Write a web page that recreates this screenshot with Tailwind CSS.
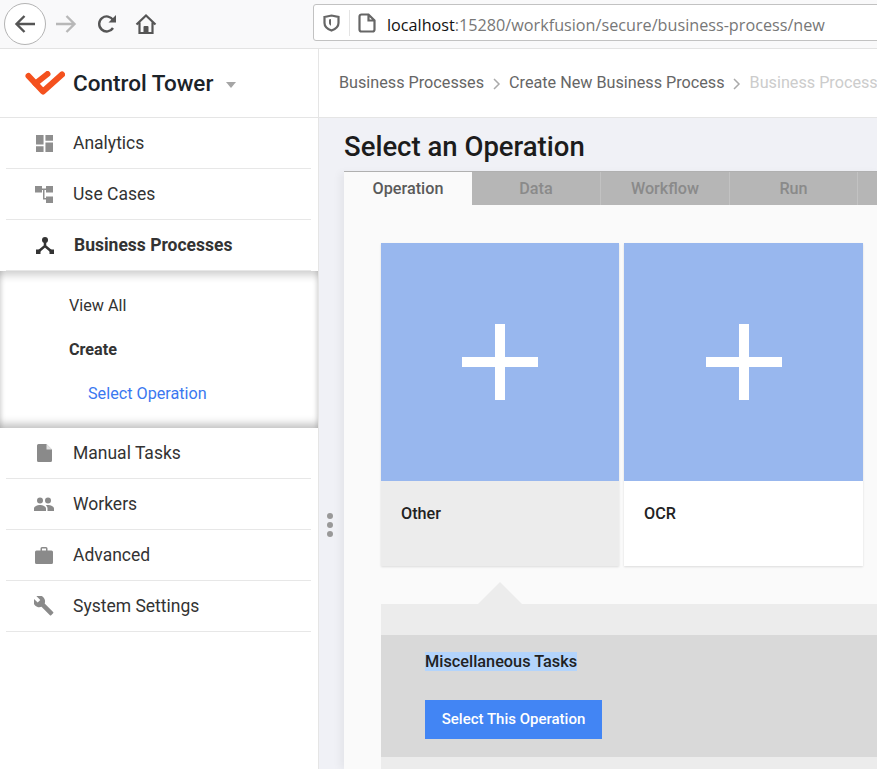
<!DOCTYPE html>
<html lang="en">
<head>
    <meta charset="UTF-8">
    <title>Control Tower</title>
    <script src="https://cdn.jsdelivr.net/npm/@tailwindcss/browser@4"></script>
</head>
<body class="w-[877px] h-[769px] overflow-hidden bg-white font-['Roboto',sans-serif] text-[#333]">

    <!-- browser toolbar -->
    <div class="h-[49px] flex items-center bg-[#f9f9fa] border-b border-[#e3e3e3]">
        <div class="ml-[4px] w-[42px] h-[42px] shrink-0 rounded-full border border-[#b4b4b4] bg-white flex items-center justify-center">
            <svg width="22" height="22" viewBox="0 0 22 22" fill="none" stroke="#555" stroke-width="2.400"><path d="M21 11H2.500M10.500 3 2.500 11l8 8"/></svg>
        </div>
        <svg class="ml-[9px] shrink-0" width="22" height="22" viewBox="0 0 22 22" fill="none" stroke="#b8b8b8" stroke-width="2.400"><path d="M1 11h18.500M11.500 3l8 8-8 8"/></svg>
        <svg class="ml-[19px] shrink-0" width="22" height="22" viewBox="0 0 22 22" fill="none" stroke="#555" stroke-width="2.400"><path d="M17 15a7.500 7.500 0 1 1 .2-7.800"/><path d="M20 2v7.500h-7.500z" fill="#555" stroke="none"/></svg>
        <svg class="ml-[17px] shrink-0" width="22" height="22" viewBox="0 0 22 22" fill="none" stroke="#555" stroke-width="2.200"><path d="M1.500 11.500 11 2.500l9.500 9M4.500 9.500V20h13V9.500"/><path d="M8.500 20v-6a1 1 0 0 1 1-1h3a1 1 0 0 1 1 1v6z" fill="#555" stroke="none"/></svg>
        <div class="ml-[156px] -mr-[20px] w-[600px] shrink-0 h-[37px] mt-[-3px] flex items-center rounded-[3px] border border-[#c2c2c2] bg-white">
            <svg class="ml-[9px] shrink-0" width="17" height="18" viewBox="0 0 17 18" fill="none" stroke="#666" stroke-width="2.200"><path d="M1.500 3 8.500 1.500l7 1.500V9c0 3.500-3 6-7 7.500-4-1.500-7-4-7-7.500z"/><path d="M8 5 6 5.500V9c0 1 .8 2 2 2.800z" fill="#666" stroke="none"/></svg>
            <div class="ml-[9px] w-px h-[26px] bg-[#e4e4e4]"></div>
            <svg class="ml-[8px] shrink-0" width="18" height="20" viewBox="0 0 18 20" fill="none" stroke="#666" stroke-width="2.200"><path d="M3.500 1.500h7l6 6v9a2 2 0 0 1-2 2h-11a2 2 0 0 1-2-2v-13a2 2 0 0 1 2-2zM10.500 1.500v6h6"/></svg>
            <div class="ml-[11px] pt-[6px] text-[16.200px] whitespace-nowrap font-['Open_Sans',sans-serif] text-[#777]"><span class="text-[#111]">localhost</span>:15280/workfusion/secure/business-process/new</div>
        </div>
    </div>

    <div class="flex h-[720px]">
        <!-- sidebar -->
        <aside class="w-[319px] shrink-0 border-r border-[#e5e5e5] bg-white">
            <div class="h-[69px] flex items-center border-b border-[#e5e5e5]">
                <svg class="ml-[25px] shrink-0" width="40" height="25" viewBox="0 0 40 25" fill="none" stroke="#f4511e" stroke-width="6" stroke-linecap="round" stroke-linejoin="round"><path d="M3.500 5 18 20.500 37 3.500"/><path d="M10.500 12.500 22.500 3"/></svg>
                <div class="ml-[8px] mt-[2px] text-[22.500px] font-medium text-[#1c2329]">Control Tower</div>
                <div class="ml-[13px] mt-[4px] w-0 h-0 border-x-[5px] border-x-transparent border-t-[6px] border-t-[#a5a5a5]"></div>
            </div>

            <nav class="text-[17.500px]">
                <div class="mx-[6px] w-[305px] h-[51px] flex items-center border-b border-[#e7e7e7]">
                    <svg class="ml-[30px] shrink-0" width="17" height="17" viewBox="0 0 18 18" fill="#8e8e8e"><path d="M0 0h8v10H0zM0 12h8v6H0zM10 0h8v6h-8zM10 8h8v10h-8z"/></svg>
                    <span class="ml-[20px]">Analytics</span>
                </div>
                <div class="mx-[6px] w-[305px] h-[51px] flex items-center border-b border-[#e7e7e7]">
                    <svg class="ml-[29px] shrink-0" width="18" height="17" viewBox="0 0 18 17" fill="#8e8e8e"><path d="M0 0h7v6.500H0zM11 0h7v6.500h-7zM11 10.500h7V17h-7z"/><path d="M7 2.500h4v1.500H9.500v8H11v1.500H8V4H7z"/></svg>
                    <span class="ml-[20px]">Use Cases</span>
                </div>
                <div class="mx-[6px] w-[305px] h-[51px] flex items-center border-b border-[#e7e7e7]">
                    <svg class="ml-[30px] shrink-0" width="18" height="17" viewBox="0 0 18 17" fill="#333"><circle cx="9" cy="3" r="3"/><path d="M9 3v6L2.500 14.500M9 9l6.500 5.500" fill="none" stroke="#333" stroke-width="2.500"/><path d="M0 12.500h4.500V17H0zM13.500 12.500H18V17h-4.500z"/></svg>
                    <span class="ml-[20px] font-bold">Business Processes</span>
                </div>

                <div class="h-[157px] pt-[23px] text-[16.200px] shadow-[inset_0_8px_8px_-4px_rgba(0,0,0,0.2),inset_0_-8px_8px_-4px_rgba(0,0,0,0.25),inset_6px_0_6px_-6px_rgba(0,0,0,0.12),inset_-6px_0_6px_-6px_rgba(0,0,0,0.12)]">
                    <div class="ml-[69px] h-[24px] leading-[24px]">View All</div>
                    <div class="ml-[69px] mt-[20px] h-[24px] leading-[24px] font-bold">Create</div>
                    <div class="ml-[88px] mt-[20px] h-[24px] leading-[24px] text-[#3b78f0]">Select Operation</div>
                </div>

                <div class="mx-[6px] w-[305px] h-[51px] flex items-center border-b border-[#e7e7e7]">
                    <svg class="ml-[31px] shrink-0" width="15" height="18" viewBox="0 0 15 18" fill="#8a8a8a"><path d="M1.500 0H9.500L15 5.500V16.500A1.500 1.500 0 0 1 13.500 18H1.500A1.500 1.500 0 0 1 0 16.500V1.500A1.500 1.500 0 0 1 1.500 0z"/><path d="M9.500 0V5.500H15z" fill="#fff" opacity=".75"/></svg>
                    <span class="ml-[21px]">Manual Tasks</span>
                </div>
                <div class="mx-[6px] w-[305px] h-[51px] flex items-center border-b border-[#e7e7e7]">
                    <svg class="ml-[28px] shrink-0" width="20" height="14" viewBox="0 0 20 14" fill="#8a8a8a"><circle cx="6" cy="3.500" r="3"/><circle cx="14" cy="3.500" r="3"/><path d="M0 14v-2.500C0 9.500 3.500 8 6 8s6 1.500 6 3.500V14zM13.500 14v-2.500c0-1.200-.6-2.300-1.700-3.200.8-.2 1.600-.3 2.200-.3 2.500 0 6 1.500 6 3.500V14z"/></svg>
                    <span class="ml-[19px]">Workers</span>
                </div>
                <div class="mx-[6px] w-[305px] h-[51px] flex items-center border-b border-[#e7e7e7]">
                    <svg class="ml-[29px] shrink-0" width="18" height="17" viewBox="0 0 18 17" fill="#8a8a8a"><path d="M5.500 3.500V1.500A1.500 1.500 0 0 1 7 0h4a1.500 1.500 0 0 1 1.500 1.500v2H16.500A1.500 1.500 0 0 1 18 5v10.500A1.500 1.500 0 0 1 16.500 17h-15A1.500 1.500 0 0 1 0 15.500V5a1.500 1.500 0 0 1 1.500-1.500zM7 3.500h4V1.500H7z"/></svg>
                    <span class="ml-[20px]">Advanced</span>
                </div>
                <div class="mx-[6px] w-[305px] h-[51px] flex items-center border-b border-[#e7e7e7]">
                    <svg class="ml-[28px] shrink-0" width="20" height="20" viewBox="0 0 20 20" fill="#8a8a8a"><path d="M19.500 16.300 10.800 7.600c.8-2.200.4-4.800-1.400-6.600C7.500-.9 4.600-1.200 2.400 0L6.300 3.900 3.600 6.600-.4 2.700C-1.500 4.900-1 7.700.9 9.600c1.800 1.800 4.400 2.200 6.600 1.400l8.700 8.700c.4.400 1 .4 1.300 0l2-2c.4-.4.400-1 0-1.400z" transform="translate(.2 .2) scale(.97)"/></svg>
                    <span class="ml-[19px]">System Settings</span>
                </div>
            </nav>
        </aside>

        <!-- content -->
        <main class="relative flex-1 min-w-0 bg-[#f0f1f6]">
            <div class="h-[69px] flex items-center pl-[20px] pt-[1px] bg-white border-b border-[#e5e5e5] text-[16.200px] text-[#666] whitespace-nowrap">
                <span>Business Processes</span>
                <svg class="mx-[8.500px] shrink-0" width="8" height="12" viewBox="0 0 8 12" fill="none" stroke="#aaa" stroke-width="1.500"><path d="M1 1l5 5-5 5"/></svg>
                <span>Create New Business Process</span>
                <svg class="mx-[8.500px] shrink-0" width="8" height="12" viewBox="0 0 8 12" fill="none" stroke="#aaa" stroke-width="1.500"><path d="M1 1l5 5-5 5"/></svg>
                <span class="text-[#ccc]">Business Process</span>
            </div>

            <div class="ml-[25px]">
                <h1 class="h-[53px] pt-[8px] text-[27.500px] leading-[42px] font-medium text-[#1c1c1c] whitespace-nowrap">Select an Operation</h1>
                <div class="w-[540px] h-[600px] bg-[#fafafa] shadow-[-6px_0_8px_-2px_rgba(0,0,0,0.05)]">
                    <div class="flex h-[34px] text-[16.200px] font-medium text-[#8a8a8a] bg-[#b6b6b6] border-t border-[#b0b0b0] text-center leading-[33px]">
                        <div class="w-[128px] h-[34px] bg-[#fafafa] text-[#5a5a5a]">Operation</div>
                        <div class="w-[129px] border-r border-[#c2c2c2]">Data</div>
                        <div class="w-[129px] border-r border-[#c2c2c2]">Workflow</div>
                        <div class="w-[128px] border-r border-[#c2c2c2]">Run</div>
                    </div>

                    <div class="flex gap-[5px] ml-[37px] mt-[38px]">
                        <div class="w-[238px] h-[323px] bg-[#ececec] shadow-[0_1px_2px_rgba(0,0,0,0.12)]">
                            <div class="h-[238px] bg-[#98b7ee] flex items-center justify-center">
                                <svg width="76" height="76" viewBox="0 0 76 76" fill="#fff"><path d="M33 0h10v33h33v10H43v33H33V43H0V33h33z"/></svg>
                            </div>
                            <div class="pl-[20px] pt-[23px] text-[16.200px] font-medium leading-[20px] text-[#222]">Other</div>
                        </div>
                        <div class="w-[239px] h-[323px] bg-white shadow-[0_1px_2px_rgba(0,0,0,0.12)]">
                            <div class="h-[238px] bg-[#98b7ee] flex items-center justify-center">
                                <svg width="76" height="76" viewBox="0 0 76 76" fill="#fff"><path d="M33 0h10v33h33v10H43v33H33V43H0V33h33z"/></svg>
                            </div>
                            <div class="pl-[20px] pt-[23px] text-[16.200px] font-medium leading-[20px] text-[#222]">OCR</div>
                        </div>
                    </div>

                    <div class="relative ml-[37px] mt-[38px] h-[165px] bg-[#ececec] pt-[31px]">
                        <div class="absolute left-[97px] -top-[22px] w-0 h-0 border-x-[22px] border-x-transparent border-b-[22px] border-b-[#ececec]"></div>
                        <div class="h-[122px] bg-[#d9d9d9] pl-[44px] pt-[17px]">
                            <div class="text-[16.300px] font-medium leading-[19px] text-[#222]"><span class="inline-block h-[19px] bg-[#b3d4fc]">Miscellaneous Tasks</span></div>
                            <div class="mt-[29px] w-[177px] h-[39px] bg-[#4285f4] text-white text-[15px] font-medium flex items-center justify-center">Select This Operation</div>
                        </div>
                    </div>
                </div>
            </div>

            <div class="absolute left-[8px] top-[464px] flex flex-col gap-[3px]">
                <div class="w-[6px] h-[6px] rounded-full bg-[#999]"></div>
                <div class="w-[6px] h-[6px] rounded-full bg-[#999]"></div>
                <div class="w-[6px] h-[6px] rounded-full bg-[#999]"></div>
            </div>
        </main>
    </div>

</body>
</html>
